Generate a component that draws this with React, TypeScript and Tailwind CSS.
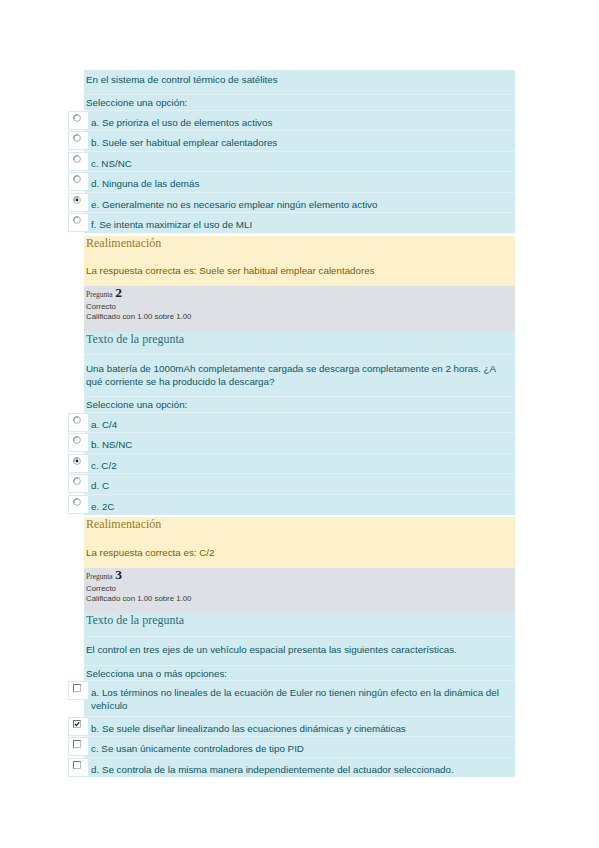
import React from "react";

type Opt = { label: React.ReactNode; checked?: boolean; wrap?: boolean };

function Radio({ checked }: { checked?: boolean }) {
  return (
    <svg width="8" height="8" viewBox="0 0 8 8" className="block">
      <circle cx="4" cy="4" r="3.4" fill="#fff" stroke="#9a9a9a" strokeWidth="0.8" />
      <path d="M1.2 5.2 A3 3 0 0 1 5.2 1.2" fill="none" stroke="#6f6f6f" strokeWidth="0.8" />
      {checked && <circle cx="4" cy="4" r="1.4" fill="#1e1e1e" />}
    </svg>
  );
}

function Check({ checked }: { checked?: boolean }) {
  return (
    <svg width="8" height="8" viewBox="0 0 8 8" className="block">
      <rect x="0.5" y="0.5" width="7" height="7" fill="#fff" stroke="#a8a8a8" strokeWidth="0.8" />
      <path d="M0.5 7.5 V0.5 H7.5" fill="none" stroke="#6a6a6a" strokeWidth="0.9" />
      {checked && <path d="M2 4 L3.4 5.6 L6.2 2.2" fill="none" stroke="#1e1e1e" strokeWidth="1.2" />}
    </svg>
  );
}

function OptionRow({ opt, kind }: { opt: Opt; kind: "radio" | "check" }) {
  return (
    <div
      className={`border-t border-[#e1f2f6] leading-[13px] pt-[5px] ${opt.wrap ? "pb-[3.5px]" : "pb-[1.6px]"}`}
    >
      <span className="float-left -ml-[16px] mr-[2px] -mt-[5px] w-[21px] h-[19px] bg-white border border-[#d3ebf1]">
        <span className="block ml-[4px] mt-[2px]">
          {kind === "check" ? <Check checked={opt.checked} /> : <Radio checked={opt.checked} />}
        </span>
      </span>
      {opt.label}
    </div>
  );
}

function QuestionBlock({
  header,
  text,
  prompt,
  options,
  kind,
}: {
  header?: boolean;
  text: React.ReactNode;
  prompt: string;
  options: Opt[];
  kind: "radio" | "check";
}) {
  return (
    <div className="bg-[#d1ebf0] text-[#0f5663]">
      {header && (
        <div className="font-['Liberation_Serif','Times_New_Roman',serif] text-[12px] leading-[14px] text-[#2d6e7a] pb-[8.5px] pl-[2px]">
          Texto de la pregunta
        </div>
      )}
      <div
        className={`leading-[13px] pl-[2px] pb-[8.5px] ${header ? "pt-[6.5px] border-t border-[#e1f2f6]" : "pt-[2.5px]"}`}
      >
        {text}
      </div>
      <div className="border-t border-[#e1f2f6] leading-[13px] pl-[2px] pt-[1px] pb-[0.5px]">{prompt}</div>
      {options.map((o, i) => (
        <OptionRow key={i} opt={o} kind={kind} />
      ))}
    </div>
  );
}

function Feedback({ answer }: { answer: string }) {
  return (
    <div className="mt-[2.5px] bg-[#fdf1cb] pl-[2px] pb-[9px]">
      <div className="font-['Liberation_Serif','Times_New_Roman',serif] text-[12px] leading-[14px] text-[#977a2c]">
        Realimentación
      </div>
      <div className="mt-[14.5px] leading-[13px] text-[#7c5d05]">{answer}</div>
    </div>
  );
}

function Info({ n }: { n: number }) {
  return (
    <div className="bg-[#dde0e5] text-[#3a3a3a] pl-[2px] pb-[9.5px]">
      <div className="leading-[14px] font-['Liberation_Serif','Times_New_Roman',serif]">
        <span className="text-[7.5px]">Pregunta</span>{" "}
        <span className="text-[13.5px] font-bold text-[#222]">{n}</span>
      </div>
      <div className="text-[7.8px] leading-[10px]">Correcto</div>
      <div className="text-[7.8px] leading-[10px]">Calificado con 1.00 sobre 1.00</div>
    </div>
  );
}

export default function App() {
  return (
    <div className="min-h-screen bg-white pt-[70px] font-['Liberation_Sans',Arial,sans-serif] text-[9.8px]">
      <div className="ml-[84px] w-[431px]">
        <QuestionBlock
          text="En el sistema de control térmico de satélites"
          prompt="Seleccione una opción:"
          kind="radio"
          options={[
            { label: "a. Se prioriza el uso de elementos activos" },
            { label: "b. Suele ser habitual emplear calentadores" },
            { label: "c. NS/NC" },
            { label: "d. Ninguna de las demás" },
            { label: "e. Generalmente no es necesario emplear ningún elemento activo", checked: true },
            { label: "f. Se intenta maximizar el uso de MLI" },
          ]}
        />
        <Feedback answer="La respuesta correcta es: Suele ser habitual emplear calentadores" />
        <Info n={2} />
        <QuestionBlock
          header
          text={
            <>
              <span className="whitespace-nowrap">
                Una batería de 1000mAh completamente cargada se descarga completamente en 2 horas. ¿A
              </span>
              <br />
              qué corriente se ha producido la descarga?
            </>
          }
          prompt="Seleccione una opción:"
          kind="radio"
          options={[
            { label: "a. C/4" },
            { label: "b. NS/NC" },
            { label: "c. C/2", checked: true },
            { label: "d. C" },
            { label: "e. 2C" },
          ]}
        />
        <Feedback answer="La respuesta correcta es: C/2" />
        <Info n={3} />
        <QuestionBlock
          header
          text="El control en tres ejes de un vehículo espacial presenta las siguientes características."
          prompt="Selecciona una o más opciones:"
          kind="check"
          options={[
            {
              wrap: true,
              label: (
                <>
                  <span className="whitespace-nowrap">
                    a. Los términos no lineales de la ecuación de Euler no tienen ningún efecto en la dinámica del
                  </span>
                  <br />
                  vehículo
                </>
              ),
            },
            { label: "b. Se suele diseñar linealizando las ecuaciones dinámicas y cinemáticas", checked: true },
            { label: "c. Se usan únicamente controladores de tipo PID" },
            { label: "d. Se controla de la misma manera independientemente del actuador seleccionado." },
          ]}
        />
      </div>
    </div>
  );
}
